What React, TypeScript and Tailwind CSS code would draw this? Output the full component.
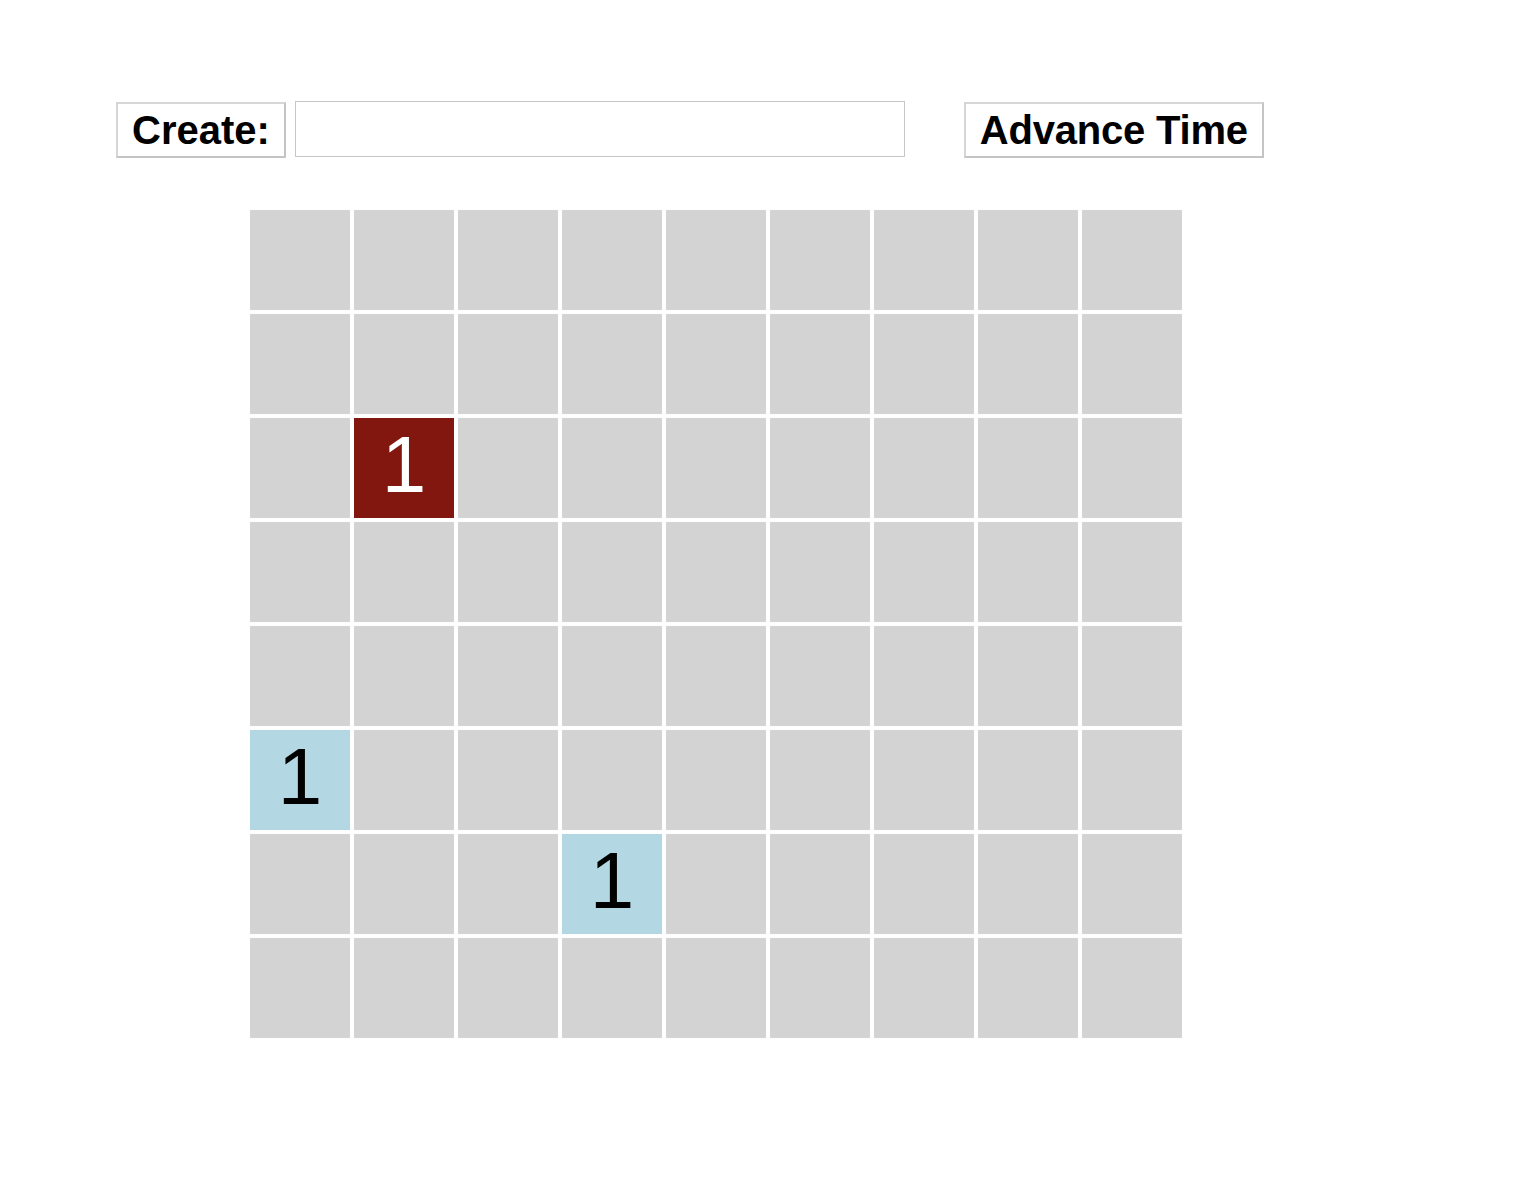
import React from "react";

const ROWS = 8;
const COLS = 9;

type Cell = { kind: "red" | "blue"; n: number };
const special: Record<string, Cell> = {
  "2-1": { kind: "red", n: 1 },
  "5-0": { kind: "blue", n: 1 },
  "6-3": { kind: "blue", n: 1 },
};

export default function App() {
  return (
    <div
      className="min-h-[1200px] w-full bg-white text-black"
      style={{ fontFamily: '"Liberation Sans", Arial, sans-serif' }}
    >
      <div className="flex items-start pt-[101px] pl-[116px]">
        <button className="mt-[1px] box-border h-[56px] border-2 border-t-[#d6d6d6] border-l-[#d6d6d6] border-b-[#c4c4c4] border-r-[#c4c4c4] bg-white px-[14px] text-[40px] font-bold leading-[48px]">
          Create:
        </button>
        <input
          type="text"
          className="ml-[9px] box-border h-[56px] w-[610px] border border-[#c6c6c6] bg-white outline-none"
        />
        <button className="ml-[59px] mt-[1px] box-border h-[56px] w-[300px] border-2 border-t-[#d6d6d6] border-l-[#d6d6d6] border-b-[#c4c4c4] border-r-[#c4c4c4] bg-white px-0 text-[40px] font-bold leading-[48px] tracking-[-0.2px]">
          Advance Time
        </button>
      </div>
      <div className="ml-[250px] mt-[52px] flex w-[932px] flex-col gap-[4px]">
        {Array.from({ length: ROWS }).map((_, r) => (
          <div key={r} className="flex gap-[4px]">
            {Array.from({ length: COLS }).map((_, c) => {
              const s = special[`${r}-${c}`];
              const bg = s
                ? s.kind === "red"
                  ? "bg-[#82170f] text-white"
                  : "bg-[#b3d7e3] text-black"
                : "bg-[#d3d3d3]";
              return (
                <div
                  key={c}
                  className={`flex h-[100px] w-[100px] items-center justify-center text-[80px] leading-none ${bg}`}
                >
                  {s ? <span className="-mt-[6px]">{s.n}</span> : null}
                </div>
              );
            })}
          </div>
        ))}
      </div>
    </div>
  );
}
